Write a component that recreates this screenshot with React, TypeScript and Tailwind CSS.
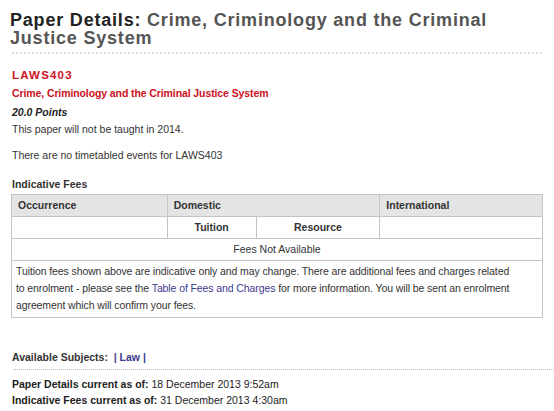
import React from "react";

export default function App() {
  const cell = "border border-[#c4c4c4] px-[6px]";
  return (
    <div className="w-[554px] h-[411px] bg-white overflow-hidden font-['Liberation_Sans',Arial,sans-serif] text-[10.5px] tracking-[0px] text-[#333]">
      <div className="pl-[10px] pr-[12px] pt-[11px]">
        <h1 className="text-[18px] leading-[18px] font-bold tracking-[0.8px] text-[#555]">
          <span className="text-[#222]">Paper Details: </span>
          Crime, Criminology and the Criminal Justice System
        </h1>
        <div className="mt-[5px] ml-[2px] border-b-2 border-dotted border-[#dcdcdc]" />
      </div>

      <div className="px-[12px]">
        <div className="mt-[13px] font-bold text-[#cc1122] tracking-[1.2px] text-[11.5px] leading-[17px]">LAWS403</div>
        <div className="mt-[1px] font-bold tracking-[-0.1px] text-[#cc1122] leading-[17px]">
          Crime, Criminology and the Criminal Justice System
        </div>
        <div className="mt-[2px] font-bold italic text-[#222] leading-[17px]">20.0 Points</div>
        <p className="leading-[17px]">This paper will not be taught in 2014.</p>
        <p className="mt-[9px] leading-[17px]">There are no timetabled events for LAWS403</p>

        <h2 className="mt-[12px] font-bold text-[#333] leading-[17px]">Indicative Fees</h2>
        <table className="mt-[1px] w-[532px] -ml-[1px] border-collapse border border-[#c4c4c4] text-[#333]">
          <tbody>
            <tr className="bg-[#e4e4e4] h-[22px] font-bold">
              <td className={`${cell} w-[156px]`}>Occurrence</td>
              <td className={cell} colSpan={2}>Domestic</td>
              <td className={`${cell} w-[163px]`}>International</td>
            </tr>
            <tr className="h-[22px] font-bold">
              <td className={cell}></td>
              <td className={`${cell} text-center w-[89px]`}>Tuition</td>
              <td className={`${cell} text-center w-[124px]`}>Resource</td>
              <td className={cell}></td>
            </tr>
            <tr className="h-[22px]">
              <td className={`${cell} text-center`} colSpan={4}>Fees Not Available</td>
            </tr>
            <tr>
              <td className={`${cell} leading-[17px] tracking-[-0.1px] pt-[2px] pb-[3px] pl-[4px]`} colSpan={4}>
                Tuition fees shown above are indicative only and may change. There are additional fees and charges related
                <br />
                to enrolment - please see the <a className="text-[#3c3a8e]">Table of Fees and Charges</a> for more
                information. You will be sent an enrolment agreement which will confirm your fees.
              </td>
            </tr>
          </tbody>
        </table>
      </div>

      <div className="mt-[31px] pl-[12px]">
        <div className="font-bold leading-[17px] text-[#333]">
          Available Subjects:&nbsp;&nbsp;
          <span className="text-[#3c3a8e]">| Law |</span>
        </div>
        <div className="mt-[3px] ml-[2px] border-b border-dotted border-[#bbb]" />
        <div className="mt-[6px] leading-[16px] text-[#222]">
          <span className="font-bold">Paper Details current as of:</span> 18 December 2013 9:52am
        </div>
        <div className="leading-[16px] text-[#222]">
          <span className="font-bold">Indicative Fees current as of:</span> 31 December 2013 4:30am
        </div>
      </div>
    </div>
  );
}
